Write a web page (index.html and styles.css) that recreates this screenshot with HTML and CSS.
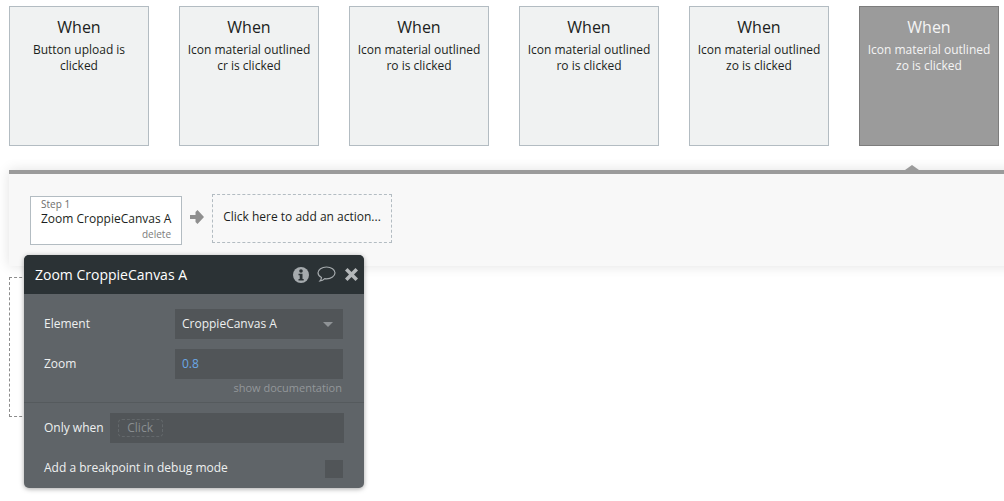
FILE: index.html
```html
<!DOCTYPE html>
<html lang="en">
<head>
<meta charset="utf-8">
<title>Workflow</title>
<link rel="stylesheet" href="styles.css">
</head>
<body>
<div class="page">
  <div class="events">
    <div class="event"><div class="event-title">When</div><div class="event-desc">Button upload is clicked</div></div>
    <div class="event"><div class="event-title">When</div><div class="event-desc">Icon material outlined cr is clicked</div></div>
    <div class="event"><div class="event-title">When</div><div class="event-desc">Icon material outlined ro is clicked</div></div>
    <div class="event"><div class="event-title">When</div><div class="event-desc">Icon material outlined ro is clicked</div></div>
    <div class="event"><div class="event-title">When</div><div class="event-desc">Icon material outlined zo is clicked</div></div>
    <div class="event selected"><div class="event-title">When</div><div class="event-desc">Icon material outlined zo is clicked</div></div>
  </div>
  <div class="actions">
    <div class="caret"></div>
    <div class="step">
      <div class="step-label">Step 1</div>
      <div class="step-name">Zoom CroppieCanvas A</div>
      <div class="step-delete">delete</div>
    </div>
    <svg class="arrow" width="14" height="14" viewBox="0 0 14 14"><path d="M0 5h5.500V2L7.500 0 14 7l-6.500 7-2-2V9H0z" fill="#8f8f8f"/></svg>
    <div class="add-action">Click here to add an action...</div>
  </div>
  <div class="ghost"></div>
  <div class="dialog">
    <div class="dialog-head">
      <div class="dialog-title">Zoom CroppieCanvas A</div>
      <svg class="head-icon" width="16" height="16" viewBox="0 0 16 16"><circle cx="8" cy="8" r="8" fill="#a5aaad"/><circle cx="8" cy="4" r="1.800" fill="#2b3235"/><path d="M5.500 6.700h4v5.300h1.200v1.500H5.500V12h1.200V8.200H5.500z" fill="#2b3235"/></svg>
      <svg class="head-icon comment-icon" width="19" height="17" viewBox="0 0 19 17"><path d="M9.500 1C4.800 1 1 3.500 1 6.800c0 2 1.500 3.700 3.500 4.700-.1 1.300-.6 2.500-1.500 3.500 1.800-.2 3.500-1 4.700-2.300.6.100 1.200.1 1.800.1 4.700 0 8.500-2.700 8.500-6S14.200 1 9.500 1z" fill="none" stroke="#a5aaad" stroke-width="1.200"/></svg>
      <svg class="head-icon close-icon" width="13" height="13" viewBox="0 0 13 13"><path d="M2.500 0 6.500 4l4-4L13 2.500l-4 4 4 4-2.500 2.500-4-4-4 4L0 10.500l4-4-4-4z" fill="#b4b8ba"/></svg>
    </div>
    <div class="dialog-body">
      <div class="row">
        <div class="row-label">Element</div>
        <div class="field select">CroppieCanvas A<span class="select-caret"></span></div>
      </div>
      <div class="row row-zoom">
        <div class="row-label">Zoom</div>
        <div class="field value">0.8</div>
      </div>
      <div class="doc-link">show documentation</div>
      <div class="condition">
        <div class="row-label">Only when</div>
        <div class="field cond-field"><span class="click-pill">Click</span></div>
      </div>
      <div class="breakpoint">
        <div class="row-label">Add a breakpoint in debug mode</div>
        <div class="checkbox"></div>
      </div>
    </div>
  </div>
</div>
</body>
</html>
```
FILE: styles.css
```css
* { box-sizing: border-box; }
html, body { margin: 0; padding: 0; background: #fff; }
body { font-family: "Open Sans", "Liberation Sans", sans-serif; color: #1c1f21; overflow: hidden; }
.page { position: relative; width: 1004px; height: 501px; overflow: hidden; padding: 6px 0 0 9px; }
.events { display: flex; gap: 30px; }
.event { flex: none; width: 140px; height: 140px; background: #f0f2f2; border: 1px solid #b3bcc2; padding: 10px 4px 0; text-align: center; }
.event-title { font-size: 16px; line-height: 21px; }
.event-desc { font-size: 12px; line-height: 16px; margin-top: 4px; }
.event.selected { background: #9b9b9b; border-color: #7d7d7d; color: #f4f4f4; }
.actions { position: relative; display: flex; align-items: center; width: 1010px; height: 96px; margin-top: 24px; background: #f8f8f8; border-top: 4px solid #9b9b9b; box-shadow: 0 0 12px rgba(0,0,0,.12); padding: 0 0 0 21px; }
.caret { position: absolute; left: 896px; top: -9px; width: 0; height: 0; border: 7px solid transparent; border-top: 0; border-bottom: 5px solid #9b9b9b; }
.step { flex: none; width: 152px; height: 49px; margin-top: 1px; background: #fff; border: 1px solid #b3bcc2; padding: 1px 10px 0; }
.step-label { font-size: 10px; line-height: 12px; color: #6d6d6d; }
.step-name { font-size: 12px; line-height: 16px; margin-top: 1px; white-space: nowrap; }
.step-delete { font-size: 10px; line-height: 14px; text-align: right; color: #7c7c7c; margin-top: 0; }
.arrow { margin: -6px 8px 0 8px; flex: none; }
.add-action { flex: none; width: 180px; height: 49px; margin-top: -3px; border: 1px dashed #b3bcc2; font-size: 12px; line-height: 43px; text-align: center; }
.ghost { position: absolute; left: 9px; top: 277px; width: 140px; height: 140px; border: 1px dashed #8c8c8c; }
.dialog { position: absolute; left: 24px; top: 255px; width: 340px; height: 233px; border-radius: 5px; background: #5f6468; box-shadow: 0 1px 5px rgba(0,0,0,.35); color: #eef0f0; overflow: hidden; }
.dialog-head { display: flex; align-items: center; height: 39px; background: #2b3235; padding: 0 6px 0 11px; }
.dialog-title { flex: 1; font-size: 14px; color: #fff; }
.head-icon { flex: none; display: block; }
.comment-icon { margin-left: 8px; }
.close-icon { margin-left: 9px; }
.dialog-body { display: flex; flex-direction: column; }
.row { display: flex; align-items: center; height: 30px; margin-top: 15px; padding: 0 21px 0 20px; }
.row-zoom { margin-top: 10px; }
.row-label { font-size: 12px; line-height: 16px; white-space: nowrap; }
.row .row-label { width: 131px; flex: none; }
.field { background: #515558; height: 30px; }
.select { position: relative; width: 168px; padding-left: 7px; font-size: 12px; line-height: 30px; }
.select-caret { position: absolute; right: 10px; top: 13px; border: 5px solid transparent; border-bottom: 0; border-top: 5px solid #8f9396; }
.value { width: 168px; padding-left: 7px; font-size: 12px; line-height: 30px; color: #6aa8e6; }
.doc-link { font-size: 11px; line-height: 14px; height: 24px; padding: 2px 22px 0 0; text-align: right; color: #93979a; border-bottom: 1px solid #555a5d; }
.condition { display: flex; align-items: center; height: 30px; margin-top: 10px; padding: 0 20px; }
.cond-field { display: flex; align-items: center; width: 234px; margin-left: 6px; flex: none; padding-left: 8px; }
.click-pill { width: 45px; height: 18px; border: 1px dashed #63686b; border-radius: 4px; font-size: 12px; line-height: 16px; text-align: center; color: #8a8e91; }
.breakpoint { display: flex; align-items: center; justify-content: space-between; margin-top: 17px; padding: 0 21px 0 20px; }
.breakpoint .row-label { margin-top: -2px; }
.checkbox { width: 18px; height: 18px; background: #515558; }
```
